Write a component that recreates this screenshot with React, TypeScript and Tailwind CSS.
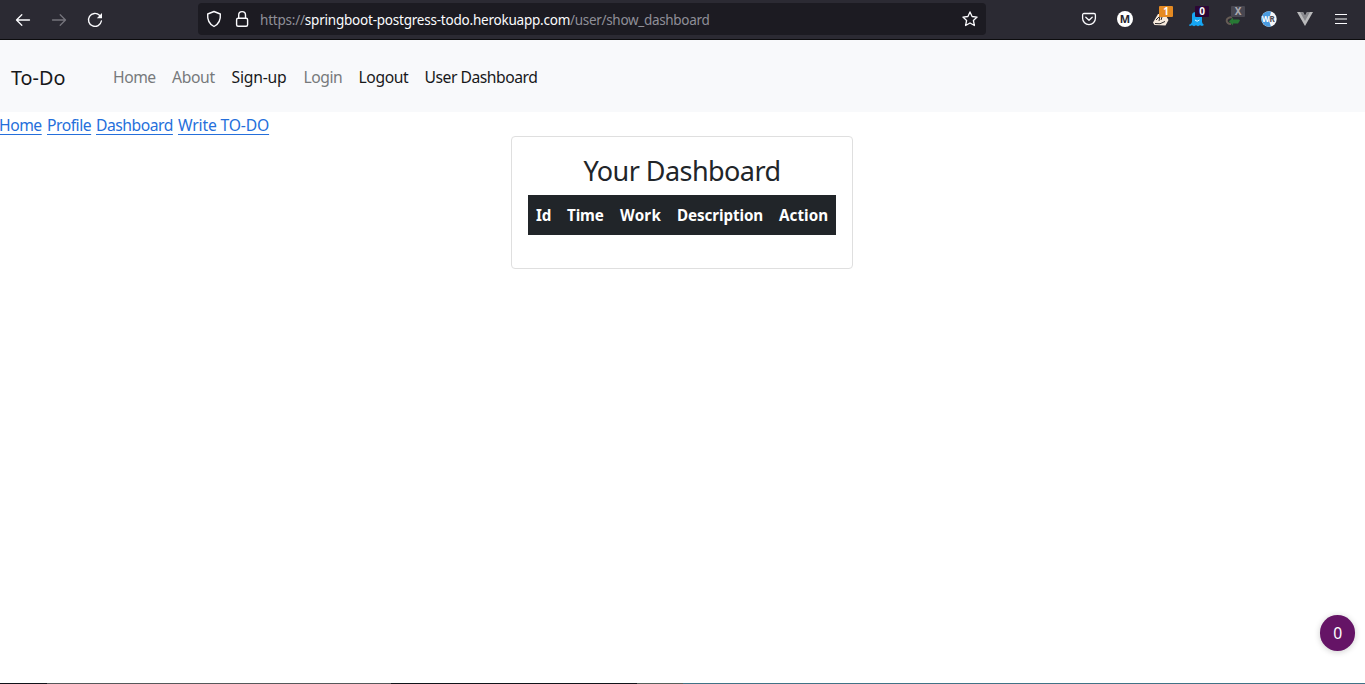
import React from "react";

function Nav({ label, w, muted }: { label: string; w: string; muted?: boolean }) {
  return (
    <a className={`block shrink-0 whitespace-nowrap ${w} ${muted ? "text-[#77797b]" : "text-[#17181a]"}`}>{label}</a>
  );
}

function BrowserBar() {
  return (
    <header className="flex h-10 shrink-0 items-start border-b border-[#0c0c0e] bg-[#2b2a33] tracking-normal">
      <div className="flex h-[39px] w-[198px] items-center pl-[15px] text-[#fbfbfe]">
        <svg width="16" height="16" viewBox="0 0 16 16" fill="none" stroke="currentColor" strokeWidth="1.3" strokeLinecap="round" strokeLinejoin="round"><path d="M14.500 8H1.800M6.800 2.800 1.500 8l5.300 5.200" /></svg>
        <svg className="ml-5 text-[#75747c]" width="16" height="16" viewBox="0 0 16 16" fill="none" stroke="currentColor" strokeWidth="1.3" strokeLinecap="round" strokeLinejoin="round"><path d="M1.500 8h12.700M9.200 2.800 14.500 8l-5.300 5.200" /></svg>
        <svg className="ml-5" width="16" height="16" viewBox="0 0 16 16" fill="none" stroke="currentColor" strokeWidth="1.4" strokeLinecap="round"><path d="M12.500 3.200A6.500 6.500 0 1 0 14.400 9" /><path d="M15 1v5.200H9.800Z" fill="currentColor" stroke="none" /></svg>
      </div>
      <div className="mt-[3px] flex h-8 w-[788px] items-center rounded-[4px] bg-[#1c1b22] pl-2 text-[#fbfbfe]">
        <svg width="16" height="18" viewBox="0 0 16 18" fill="none" stroke="currentColor" strokeWidth="1.4" strokeLinejoin="round"><path d="M8 1.500 14.300 4c.5 5.600-1.400 10-6.300 12.500C3.100 14 1.200 9.600 1.700 4Z" /></svg>
        <svg className="ml-3" width="16" height="18" viewBox="0 0 16 18" fill="none" stroke="currentColor" strokeWidth="1.4"><rect x="2.600" y="8.200" width="11" height="8" rx="1.500" /><path d="M4.700 8V5a3.400 3.400 0 0 1 6.800 0v3" /></svg>
        <div className="ml-[10px] w-[702px] whitespace-nowrap pt-px text-[13.500px] tracking-[-0.320px] text-[#8f8f98]">
          <span className="tracking-[-0.210px]">https://</span><span className="tracking-[-0.220px] text-[#fbfbfe]">springboot-postgress-todo.herokuapp.com</span>/user/show_dashboard
        </div>
        <svg width="16" height="16" viewBox="0 0 16 16" fill="none" stroke="currentColor" strokeWidth="1.3" strokeLinejoin="round"><path d="m8 .9 2.100 4.600 5 .6-3.700 3.400 1 5L8 12l-4.400 2.500 1-5L.9 6.100l5-.6Z" /></svg>
      </div>
      <div className="flex h-[38px] flex-1 items-center justify-end gap-5 pr-4 text-[#fbfbfe]">
        <svg width="16" height="16" viewBox="0 0 16 16" fill="none" stroke="currentColor" strokeWidth="1.3" strokeLinecap="round" strokeLinejoin="round"><path d="M3 2.500h10a1.400 1.400 0 0 1 1.400 1.400v3.300a6.400 6.400 0 0 1-12.800 0V3.900A1.400 1.400 0 0 1 3 2.500Z" /><path d="m4.800 6.300 3.200 3 3.200-3" /></svg>
        <span className="flex size-4 items-center justify-center rounded-full bg-white text-[11px] font-bold text-[#25242d]">M</span>
        <div className="relative size-4">
          <svg width="16" height="16" viewBox="0 0 16 16"><path d="M0 11.500 5 3h7l3.500 6-3 5.500-11-.5Z" fill="#f6e9dc" /><path d="m3 9 4-4-1 5M8 9l1-3M2 12.500q5 1.500 10-2" fill="none" stroke="#2d2929" strokeWidth="1" /></svg>
          <span className="absolute -top-[5px] left-[6px] flex h-[11px] w-[14px] items-center justify-center rounded-[1px] bg-[#e58a22] text-[10px] leading-[11px] font-bold">1</span>
        </div>
        <div className="relative size-4">
          <svg width="16" height="16" viewBox="0 0 16 16"><path d="M3 4q0-3 4-3h3q3 0 3 5v5q.500 2 2 3l-2 1-2-.7-2 1-2-1-2 1-2-1-2 .7-1.500-1Q3 13 3 10Z" fill="#16a6f4" /><path d="M6 9q2 2.500 4.500 0" fill="none" stroke="#d5f3ff" /></svg>
          <span className="absolute -top-[5px] left-[6px] flex h-[11px] w-[14px] items-center justify-center rounded-[1px] bg-[#2b0635] text-[10px] leading-[11px] font-bold">0</span>
        </div>
        <div className="relative size-4">
          <svg width="16" height="16" viewBox="0 0 16 16"><path d="M7 6.500a4 3.300 0 1 0-1 6.400" fill="none" stroke="#665c55" strokeWidth="2" /><path d="m4 10.500 4-4v2h6l1 1-2 3H8v2Z" fill="#287a35" /></svg>
          <span className="absolute -top-[5px] left-[6px] flex h-[11px] w-[14px] items-center justify-center rounded-[1px] bg-[#484751] text-[10px] leading-[11px] font-bold text-[#aaa9af]">X</span>
        </div>
        <svg width="16" height="16" viewBox="0 0 16 16"><circle cx="8" cy="8" r="7.700" fill="#f4f6f8" /><path d="M10 .5A7.700 7.700 0 1 0 10 15.400L8 10Z" fill="#4a9be0" /><text x=".7" y="11" fontSize="8" fontWeight="700" fill="#fff">W</text><text x="8.500" y="11" fontSize="8" fontWeight="700" fill="#494950">R</text></svg>
        <svg width="16" height="16" viewBox="0 0 16 16"><path d="M0 1h6l2 4 2-4h6L8 15Z" fill="#b9b9bb" /><path d="M3 1h3l2 4 2-4h3L8 10Z" fill="#88888d" /></svg>
        <svg width="16" height="16" viewBox="0 0 16 16" stroke="currentColor" strokeWidth="1.200"><path d="M2 3.500h12M2 8h12M2 12.500h12" /></svg>
      </div>
    </header>
  );
}

export default function App() {
  return (
    <div className="flex h-[684px] w-[1365px] flex-col overflow-hidden bg-white font-['Noto_Sans','Open_Sans',sans-serif] text-[15.700px] leading-6 tracking-[-0.480px]">
      <BrowserBar />
      <nav className="flex h-[72px] shrink-0 items-center bg-[#f8f9fb] pl-[11px] pt-[3px]">
        <div className="w-[102px] text-[19.800px] tracking-[0px] text-[#17181a]">To-Do</div>
        <div className="flex gap-4 pb-px">
          <Nav label="Home" w="w-[43px]" muted />
          <Nav label="About" w="w-[43.500px] tracking-[-0.350px]" muted />
          <Nav label="Sign-up" w="w-[56px] tracking-[-0.200px]" />
          <Nav label="Login" w="w-[39px]" muted />
          <Nav label="Logout" w="w-[50px] tracking-[-0.400px]" />
          <Nav label="User Dashboard" w="w-[114px]" />
        </div>
      </nav>
      <main className="flex flex-1 flex-col">
        <div className="flex h-6 whitespace-nowrap pt-px text-[#256fdb]">
          <a className="mr-[5px] w-[42px] -indent-px underline underline-offset-[3px]">Home</a>
          <a className="mr-1 w-[45px] underline underline-offset-[3px]">Profile</a>
          <a className="mr-[5px] w-[77px] underline underline-offset-[3px]">Dashboard</a>
          <a className="tracking-[-0.170px] underline underline-offset-[3px]">Write TO-DO</a>
        </div>
        <section className="ml-[511px] h-[133px] w-[342px] rounded-[4px] border border-[#dfdfdf] px-4 pt-4 text-[#212529]">
          <h1 className="mb-2 flex h-[34px] items-center justify-center whitespace-nowrap pt-[2px] text-[27px] tracking-[-0.560px]">Your Dashboard</h1>
          <table className="w-full table-fixed border-collapse bg-[#212529] text-[15.200px] tracking-[-0.090px] text-white">
            <thead>
              <tr className="h-10 text-left whitespace-nowrap">
                <th className="w-[31px] pl-2">Id</th>
                <th className="w-[53px] pl-2">Time</th>
                <th className="w-[57px] pl-2 tracking-[0.250px]">Work</th>
                <th className="w-[102px] pl-2">Description</th>
                <th className="w-[65px] pl-2 tracking-[0.060px]">Action</th>
              </tr>
            </thead>
          </table>
        </section>
      </main>
      <div className="mr-[10px] mb-8 flex h-9 w-[35px] shrink-0 items-center justify-center self-end rounded-full bg-[#651466] pb-px text-white shadow-[0_1px_6px_#0003]">0</div>
      <footer className="flex h-px shrink-0">
        <span className="w-[47px] bg-[#111319]" />
        <span className="w-[344px] bg-[#56585a]" />
        <span className="w-[246px] bg-[#111419]" />
        <span className="w-[46px] bg-[#56605c]" />
        <span className="flex-1 bg-[#417286]" />
      </footer>
    </div>
  );
}
